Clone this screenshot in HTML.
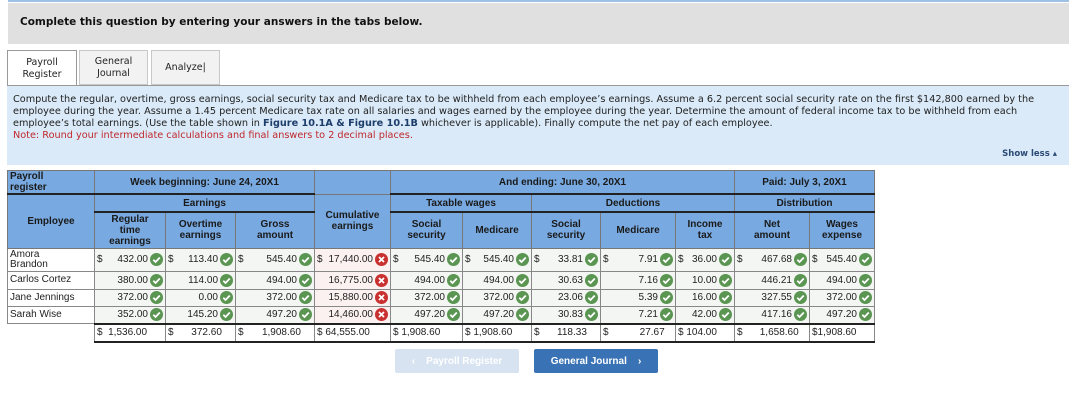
<!DOCTYPE html>
<html><head><meta charset="utf-8"><style>
body{margin:0;width:1088px;height:416px;background:#fff;position:relative;font-family:"Liberation Sans",Arial,sans-serif;overflow:hidden}
.top{position:absolute;left:8px;top:0;width:1061px;height:2px;background:#9dc0e4}
.hdr{position:absolute;left:8px;top:3px;width:1061px;height:41px;background:#e0e0e0;font-family:"DejaVu Sans",Verdana,sans-serif;font-weight:bold;font-size:10.5px;color:#111}
.hdr span{position:absolute;left:12px;top:13px}
.tab{position:absolute;top:50px;height:35px;border:1px solid #c8c8c8;background:#f2f2f2;font-family:"DejaVu Sans",Verdana,sans-serif;font-size:9.5px;color:#222;text-align:center;display:flex;align-items:center;justify-content:center;line-height:12px;box-sizing:border-box}
.info{position:absolute;left:7px;top:85px;width:1062px;height:80px;background:#daeaf8;border-top:1px solid #999;font-family:"DejaVu Sans",Verdana,sans-serif;font-size:9.7px;color:#222;box-sizing:border-box}
.info p{margin:0;position:absolute;left:6px;top:8px;width:1046px;line-height:12px}
.note{color:#c0282d}
.show{position:absolute;right:12px;top:63px;font-weight:bold;font-size:8.5px;color:#2b4a74}
table{position:absolute;left:7px;top:170px;border-collapse:collapse;table-layout:fixed;font-size:10px;color:#222}
th{background:#78a9e0;font-weight:bold;border:1px solid #777;padding:0;line-height:11px;color:#1a1a1a}
th.b{border-bottom:2px solid #222}
td{border:1px solid #888;padding:0;height:16px;background:#f4f6f3;font-size:10px}
td.e{background:#fff;padding-left:2px;line-height:10px}
td.p{background:#fcf1f1}
tr.t td{background:#fff;border-top:2px solid #222;border-bottom:2px solid #222}
.c{display:flex;align-items:center;padding:0 2px 0 2px;white-space:nowrap}
.c .d{margin-right:auto}
.ok,.no{display:inline-block;width:13px;height:13px;border-radius:50%;margin-left:2px;flex:none;position:relative}
.ok{background:#5a9552}.no{background:#c8312f}
.ok svg,.no svg{position:absolute;left:0;top:0}
.btn{position:absolute;top:349px;height:24px;width:124px;border-radius:2px;font-size:10px;font-weight:bold;color:#fff;display:flex;align-items:center;justify-content:center}
</style></head><body>
<div class="top"></div>
<div class="hdr"><span>Complete this question by entering your answers in the tabs below.</span></div>
<div class="tab" style="left:7px;width:70px;background:#fff;border-color:#999;border-bottom:none;height:36px">Payroll<br>Register</div>
<div class="tab" style="left:79px;width:69px">General<br>Journal</div>
<div class="tab" style="left:151px;width:69px">Analyze|</div>
<div class="info"><p>Compute the regular, overtime, gross earnings, social security tax and Medicare tax to be withheld from each employee’s earnings. Assume a 6.2 percent social security rate on the first $142,800 earned by the employee during the year. Assume a 1.45 percent Medicare tax rate on all salaries and wages earned by the employee during the year. Determine the amount of federal income tax to be withheld from each employee’s total earnings. (Use the table shown in <b style="color:#1d3d6b">Figure 10.1A &amp; Figure 10.1B</b> whichever is applicable). Finally compute the net pay of each employee.<br><span class="note">Note: Round your intermediate calculations and final answers to 2 decimal places.</span></p><span class="show">Show less ▴</span></div>

<table>
<colgroup><col style="width:87px"><col style="width:71px"><col style="width:70px"><col style="width:79px"><col style="width:76px"><col style="width:72px"><col style="width:69px"><col style="width:69px"><col style="width:75px"><col style="width:59px"><col style="width:75px"><col style="width:65px"></colgroup>
<tr style="height:23px"><th class="b" style="text-align:left;padding-left:2px">Payroll<br>register</th><th class="b" colspan="3">Week beginning: June 24, 20X1</th><th></th><th class="b" colspan="5">And ending: June 30, 20X1</th><th class="b" colspan="2">Paid: July 3, 20X1</th></tr>
<tr style="height:18px"><th rowspan="2">Employee</th><th class="b" colspan="3">Earnings</th><th rowspan="2">Cumulative<br>earnings</th><th class="b" colspan="2">Taxable wages</th><th class="b" colspan="3">Deductions</th><th class="b" colspan="2">Distribution</th></tr>
<tr style="height:36px"><th>Regular<br>time<br>earnings</th><th>Overtime<br>earnings</th><th>Gross<br>amount</th><th>Social<br>security</th><th>Medicare</th><th>Social<br>security</th><th>Medicare</th><th>Income<br>tax</th><th>Net<br>amount</th><th>Wages<br>expense</th></tr>
<tr style="height:23px"><td class="e">Amora<br>Brandon</td>
<td><div class="c"><span class="d">$</span>432.00<i class="ok"></i></div></td>
<td><div class="c"><span class="d">$</span>113.40<i class="ok"></i></div></td>
<td><div class="c"><span class="d">$</span>545.40<i class="ok"></i></div></td>
<td class="p"><div class="c"><span class="d">$</span>17,440.00<i class="no"></i></div></td>
<td><div class="c"><span class="d">$</span>545.40<i class="ok"></i></div></td>
<td><div class="c"><span class="d">$</span>545.40<i class="ok"></i></div></td>
<td><div class="c"><span class="d">$</span>33.81<i class="ok"></i></div></td>
<td><div class="c"><span class="d">$</span>7.91<i class="ok"></i></div></td>
<td><div class="c"><span class="d">$</span>36.00<i class="ok"></i></div></td>
<td><div class="c"><span class="d">$</span>467.68<i class="ok"></i></div></td>
<td><div class="c"><span class="d">$</span>545.40<i class="ok"></i></div></td></tr>
<tr style="height:18px"><td class="e">Carlos Cortez</td>
<td><div class="c"><span class="d"></span>380.00<i class="ok"></i></div></td>
<td><div class="c"><span class="d"></span>114.00<i class="ok"></i></div></td>
<td><div class="c"><span class="d"></span>494.00<i class="ok"></i></div></td>
<td class="p"><div class="c"><span class="d"></span>16,775.00<i class="no"></i></div></td>
<td><div class="c"><span class="d"></span>494.00<i class="ok"></i></div></td>
<td><div class="c"><span class="d"></span>494.00<i class="ok"></i></div></td>
<td><div class="c"><span class="d"></span>30.63<i class="ok"></i></div></td>
<td><div class="c"><span class="d"></span>7.16<i class="ok"></i></div></td>
<td><div class="c"><span class="d"></span>10.00<i class="ok"></i></div></td>
<td><div class="c"><span class="d"></span>446.21<i class="ok"></i></div></td>
<td><div class="c"><span class="d"></span>494.00<i class="ok"></i></div></td></tr>
<tr style="height:17px"><td class="e">Jane Jennings</td>
<td><div class="c"><span class="d"></span>372.00<i class="ok"></i></div></td>
<td><div class="c"><span class="d"></span>0.00<i class="ok"></i></div></td>
<td><div class="c"><span class="d"></span>372.00<i class="ok"></i></div></td>
<td class="p"><div class="c"><span class="d"></span>15,880.00<i class="no"></i></div></td>
<td><div class="c"><span class="d"></span>372.00<i class="ok"></i></div></td>
<td><div class="c"><span class="d"></span>372.00<i class="ok"></i></div></td>
<td><div class="c"><span class="d"></span>23.06<i class="ok"></i></div></td>
<td><div class="c"><span class="d"></span>5.39<i class="ok"></i></div></td>
<td><div class="c"><span class="d"></span>16.00<i class="ok"></i></div></td>
<td><div class="c"><span class="d"></span>327.55<i class="ok"></i></div></td>
<td><div class="c"><span class="d"></span>372.00<i class="ok"></i></div></td></tr>
<tr style="height:17px"><td class="e">Sarah Wise</td>
<td><div class="c"><span class="d"></span>352.00<i class="ok"></i></div></td>
<td><div class="c"><span class="d"></span>145.20<i class="ok"></i></div></td>
<td><div class="c"><span class="d"></span>497.20<i class="ok"></i></div></td>
<td class="p"><div class="c"><span class="d"></span>14,460.00<i class="no"></i></div></td>
<td><div class="c"><span class="d"></span>497.20<i class="ok"></i></div></td>
<td><div class="c"><span class="d"></span>497.20<i class="ok"></i></div></td>
<td><div class="c"><span class="d"></span>30.83<i class="ok"></i></div></td>
<td><div class="c"><span class="d"></span>7.21<i class="ok"></i></div></td>
<td><div class="c"><span class="d"></span>42.00<i class="ok"></i></div></td>
<td><div class="c"><span class="d"></span>417.16<i class="ok"></i></div></td>
<td><div class="c"><span class="d"></span>497.20<i class="ok"></i></div></td></tr>
<tr class="t" style="height:18px"><td style="border:none;border-top:1px solid #888"></td>
<td><div class="c">$&nbsp; 1,536.00</div></td>
<td><div class="c"><span class="d">$</span>372.60&nbsp;&nbsp;&nbsp;&nbsp;</div></td>
<td><div class="c"><span class="d">$</span>1,908.60&nbsp;&nbsp;&nbsp;&nbsp;</div></td>
<td><div class="c">$ 64,555.00</div></td>
<td><div class="c">$ 1,908.60</div></td>
<td><div class="c">$ 1,908.60</div></td>
<td><div class="c"><span class="d">$</span>118.33&nbsp;&nbsp;&nbsp;&nbsp;</div></td>
<td><div class="c"><span class="d">$</span>27.67&nbsp;&nbsp;&nbsp;</div></td>
<td><div class="c">$ 104.00</div></td>
<td><div class="c"><span class="d">$</span>1,658.60&nbsp;&nbsp;&nbsp;</div></td>
<td><div class="c">$1,908.60</div></td></tr>
</table>

<div class="btn" style="left:395px;background:#d7e3f1">‹&nbsp;&nbsp;&nbsp; Payroll Register</div>
<div class="btn" style="left:534px;background:#3a73b5">General Journal&nbsp;&nbsp;&nbsp; ›</div>

<script>
document.querySelectorAll('.ok').forEach(e=>e.innerHTML='<svg width="13" height="13" viewBox="0 0 13 13"><path d="M3.3 6.8 L5.5 9 L9.8 4.5" stroke="#fff" stroke-width="1.8" fill="none"/></svg>');
document.querySelectorAll('.no').forEach(e=>e.innerHTML='<svg width="13" height="13" viewBox="0 0 13 13"><path d="M4 4 L9 9 M9 4 L4 9" stroke="#fff" stroke-width="1.8" fill="none"/></svg>');
</script>
</body></html>
